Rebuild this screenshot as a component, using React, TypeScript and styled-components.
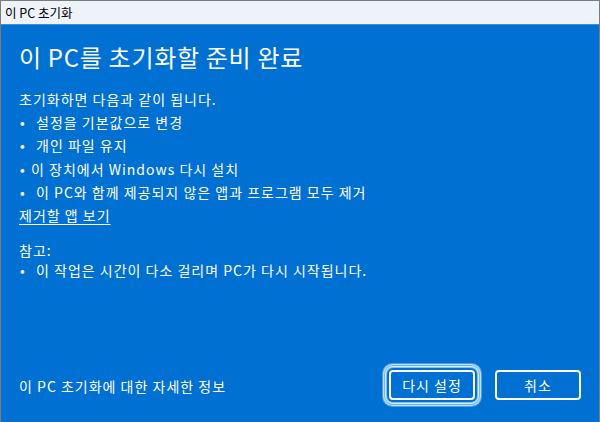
import React from 'react';
import styled, { createGlobalStyle } from 'styled-components';

const BLUE = '#0070d2';

const GlobalStyle = createGlobalStyle`
  html, body {
    margin: 0;
    padding: 0;
    background: ${BLUE};
  }
  body {
    font-family: "Noto Sans CJK KR", "Noto Sans", sans-serif;
  }
`;

const Window = styled.div`
  width: 600px;
  height: 422px;
  box-sizing: border-box;
  border: 1px solid #7b7b7b;
  border-bottom: none;
  display: flex;
  flex-direction: column;
  background: ${BLUE};
  color: #fff;
`;

const TitleBar = styled.div`
  height: 23px;
  flex-shrink: 0;
  display: flex;
  align-items: center;
  padding-left: 4px;
  background: #eef2f9;
  border-bottom: 1px solid #3d8ee0;
  color: #000;
  font-size: 12.5px;
`;

const Content = styled.div`
  flex: 1;
  display: flex;
  flex-direction: column;
  padding: 14px 18px 0 18px;
`;

const Heading = styled.h1`
  margin: 0;
  font-size: 24px;
  font-weight: 400;
  line-height: 36px;
  letter-spacing: 0.7px;
`;

const Section = styled.div<{ $top: number }>`
  margin-top: ${p => p.$top}px;
  font-size: 14px;
  line-height: 23.2px;
  letter-spacing: 1px;
`;

const Line = styled.div``;

const Item = styled.div<{ $indent: number }>`
  display: flex;
  align-items: baseline;

  &::before {
    content: '•';
    display: inline-block;
    width: ${p => p.$indent}px;
    padding-left: 1px;
  }
`;

const UnderLink = styled.a`
  color: #fff;
  text-decoration: underline;
  text-underline-offset: 3px;
  cursor: pointer;
`;

const Footer = styled.div`
  margin-top: auto;
  height: 52px;
  display: flex;
  align-items: flex-start;
  justify-content: space-between;
`;

const InfoText = styled.span`
  font-size: 14px;
  letter-spacing: 1px;
  margin-top: 6px;
`;

const Buttons = styled.div`
  display: flex;
  gap: 20px;
`;

const Button = styled.button<{ $focused?: boolean }>`
  width: 86px;
  height: 30px;
  box-sizing: border-box;
  border: 2px solid #fff;
  border-radius: 4px;
  background: ${BLUE};
  color: #fff;
  font-family: "Noto Sans CJK KR", "Noto Sans", sans-serif;
  font-size: 14px;
  letter-spacing: 1px;
  padding: 0;
  box-shadow: ${p =>
    p.$focused
      ? `0 0 0 2px ${BLUE}, 0 0 0 3px #7fc0ff, 0 0 0 4px #d8ecff, 0 0 0 5px #6fb4f4, 0 0 0 6px #bfe0ff, 0 0 0 7px #4f9fe8`
      : 'none'};
`;

export default function App() {
  return (
    <>
      <GlobalStyle />
      <Window>
        <TitleBar>이 PC 초기화</TitleBar>
        <Content>
          <Heading>이 PC를 초기화할 준비 완료</Heading>
          <Section $top={13}>
            <Line>초기화하면 다음과 같이 됩니다.</Line>
            <Item $indent={16}>설정을 기본값으로 변경</Item>
            <Item $indent={16}>개인 파일 유지</Item>
            <Item $indent={11}>이 장치에서 Windows 다시 설치</Item>
            <Item $indent={16}>이 PC와 함께 제공되지 않은 앱과 프로그램 모두 제거</Item>
            <Line>
              <UnderLink>제거할 앱 보기</UnderLink>
            </Line>
          </Section>
          <Section $top={12}>
            <Line>참고:</Line>
            <Item $indent={16} style={{ marginTop: -3 }}>
              이 작업은 시간이 다소 걸리며 PC가 다시 시작됩니다.
            </Item>
          </Section>
          <Footer>
            <InfoText>이 PC 초기화에 대한 자세한 정보</InfoText>
            <Buttons>
              <Button $focused>다시 설정</Button>
              <Button>취소</Button>
            </Buttons>
          </Footer>
        </Content>
      </Window>
    </>
  );
}
